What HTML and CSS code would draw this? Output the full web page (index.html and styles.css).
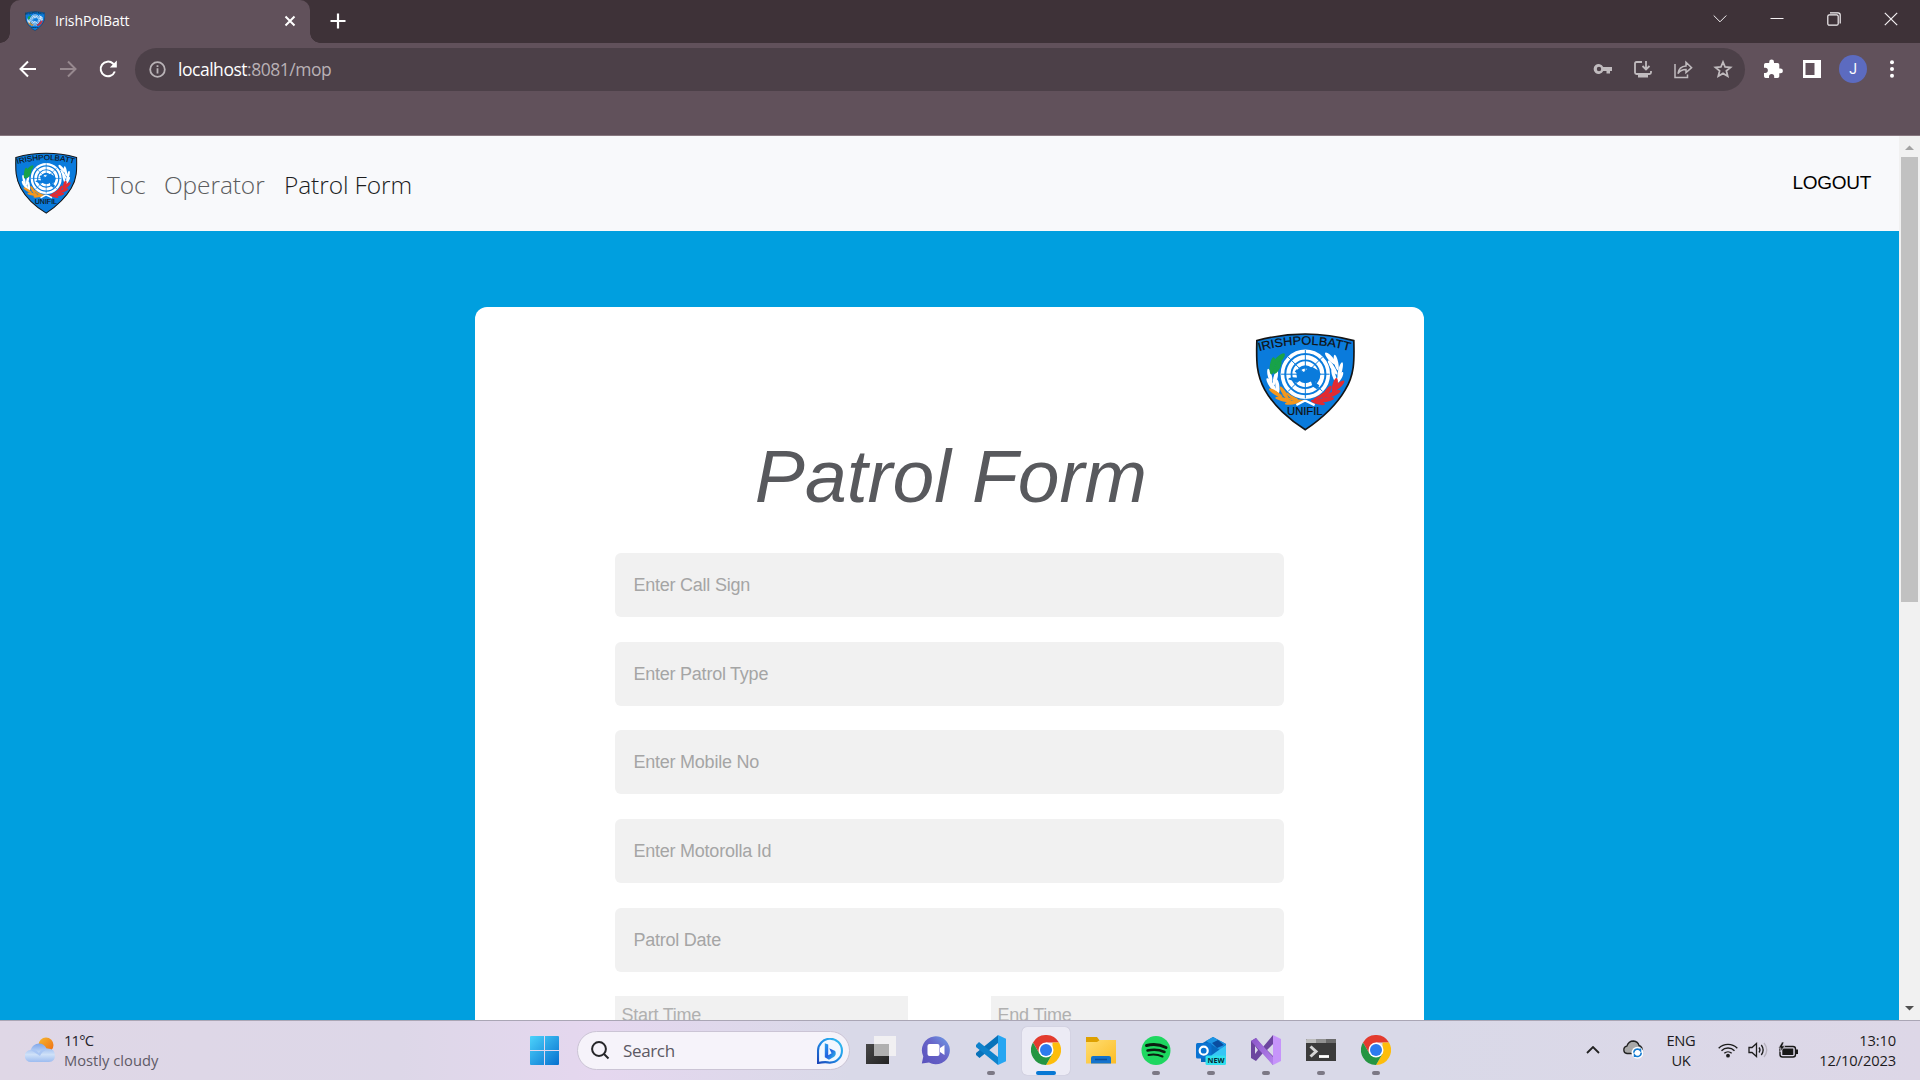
FILE: index.html
```html
<!DOCTYPE html>
<html lang="en">
<head>
<meta charset="utf-8">
<title>IrishPolBatt</title>
<link rel="stylesheet" href="styles.css">
</head>
<body>
<svg class="defs" aria-hidden="true">
  <defs>
    <linearGradient id="win" x1="0" y1="0" x2="1" y2="1"><stop offset="0" stop-color="#4cd3fb"/><stop offset="1" stop-color="#0670cf"/></linearGradient>
    <linearGradient id="sun" x1="0" y1="0" x2="1" y2="1"><stop offset="0" stop-color="#f5b92f"/><stop offset="1" stop-color="#ef6a12"/></linearGradient>
    <linearGradient id="cloud" x1="0" y1="0" x2="0" y2="1"><stop offset="0" stop-color="#7fa6ea"/><stop offset=".6" stop-color="#cfe1f8"/><stop offset="1" stop-color="#9dbcf0"/></linearGradient>
    <linearGradient id="bing" x1="1" y1="0" x2="0" y2="1"><stop offset="0" stop-color="#35c3f0"/><stop offset=".5" stop-color="#1f8fe8"/><stop offset="1" stop-color="#1b45b8"/></linearGradient>
    <linearGradient id="bingb" x1="0" y1="0" x2="1" y2="1"><stop offset="0" stop-color="#2aa5ee"/><stop offset=".5" stop-color="#2160e0"/><stop offset="1" stop-color="#35c8e8"/></linearGradient>
    <linearGradient id="teams" x1="1" y1="0" x2="0" y2="1"><stop offset="0" stop-color="#6fa0e8"/><stop offset=".45" stop-color="#6764c8"/><stop offset="1" stop-color="#5a52bd"/></linearGradient>
    <linearGradient id="folder" x1="0" y1="0" x2="1" y2="1"><stop offset="0" stop-color="#ffdd72"/><stop offset="1" stop-color="#fcbd25"/></linearGradient>
    <linearGradient id="vs" x1="0" y1="0" x2="1" y2="1"><stop offset="0" stop-color="#8a55c8"/><stop offset="1" stop-color="#b684ee"/></linearGradient>
    <linearGradient id="dark" x1="0" y1="0" x2="1" y2="1"><stop offset="0" stop-color="#484848"/><stop offset="1" stop-color="#242424"/></linearGradient>
    <path id="motto" d="M87 124Q225 84 363 124"/>
  </defs>
  <symbol id="shield" viewBox="75 66 300 298">
    <path d="M80 92Q225 52 372 92C373 145 376 192 346 240C318 288 270 330 226 360C180 332 130 287 104 240C76 190 79 145 80 92Z" fill="#0a7bdc" stroke="#151515" stroke-width="5"/>
    <g fill="#fff">
      <ellipse cx="119" cy="198" rx="6" ry="22" transform="rotate(-14 119 198)"/><ellipse cx="136" cy="204" rx="6" ry="23" transform="rotate(14 136 204)"/>
      <ellipse cx="124" cy="226" rx="7" ry="25" transform="rotate(-34 124 226)"/><ellipse cx="142" cy="230" rx="6" ry="22" transform="rotate(-6 142 230)"/>
      <ellipse cx="302" cy="146" rx="7" ry="24" transform="rotate(-42 302 146)"/><ellipse cx="319" cy="158" rx="6" ry="24" transform="rotate(-12 319 158)"/>
      <ellipse cx="308" cy="173" rx="6" ry="25" transform="rotate(-33 308 173)"/><ellipse cx="331" cy="181" rx="6" ry="25" transform="rotate(14 331 181)"/>
      <ellipse cx="312" cy="197" rx="5" ry="21" transform="rotate(-18 312 197)"/><ellipse cx="329" cy="204" rx="6" ry="20" transform="rotate(30 329 204)"/>
    </g>
    <g fill="#18a248"><ellipse cx="146" cy="149" rx="9" ry="25" transform="rotate(44 146 149)"/><ellipse cx="127" cy="168" rx="8" ry="26" transform="rotate(8 127 168)"/><ellipse cx="142" cy="172" rx="8" ry="22" transform="rotate(28 142 172)"/></g>
    <g fill="#f4971d"><ellipse cx="137" cy="250" rx="6" ry="24" transform="rotate(-57 137 250)"/><ellipse cx="162" cy="249" rx="6" ry="22" transform="rotate(-32 162 249)"/><ellipse cx="160" cy="269" rx="6" ry="25" transform="rotate(-78 160 269)"/><ellipse cx="187" cy="261" rx="6" ry="22" transform="rotate(-55 187 261)"/><ellipse cx="188" cy="278" rx="6" ry="24" transform="rotate(80 188 278)"/><path d="M150 250Q180 272 230 270L225 276Q180 279 150 250"/></g>
    <g fill="#e22b31"><ellipse cx="315" cy="228" rx="8" ry="24" transform="rotate(12 315 228)"/><ellipse cx="326" cy="228" rx="7" ry="23" transform="rotate(48 326 228)"/><ellipse cx="291" cy="247" rx="7" ry="23" transform="rotate(35 291 247)"/><ellipse cx="310" cy="252" rx="7" ry="24" transform="rotate(67 310 252)"/><ellipse cx="268" cy="261" rx="6" ry="22" transform="rotate(55 268 261)"/><ellipse cx="287" cy="270" rx="7" ry="26" transform="rotate(80 287 270)"/><ellipse cx="264" cy="278" rx="6" ry="22" transform="rotate(-75 264 278)"/></g>
    <path d="M199 286L225 272L254 286" fill="none" stroke="#fff" stroke-width="7"/>
    <circle cx="226" cy="193" r="77" fill="#0a7bdc"/>
    <g fill="none" stroke="#fff"><circle cx="226" cy="193" r="69" stroke-width="11"/><circle cx="226" cy="193" r="51" stroke-width="13"/><circle cx="226" cy="193" r="33" stroke-width="12"/><circle cx="226" cy="193" r="13" stroke-width="9"/></g>
    <path d="M226 120V266M153 193H299M174 141L278 245M278 141L174 245" stroke="#0a7bdc" stroke-width="3"/>
    <path d="M174 208C181 197 198 205 210 202L203 192L194 185L200 178L214 183L222 190L231 176L247 171L264 181L272 192L268 208L255 217L268 226L262 239L248 230L243 215L230 217L214 211L198 219L186 212Z" fill="#0a7bdc"/>
    <text class="crest-text" font-size="36" textLength="276" lengthAdjust="spacingAndGlyphs"><textPath href="#motto" textLength="276" lengthAdjust="spacingAndGlyphs">IRISHPOLBATT</textPath></text>
    <text class="crest-text" x="171" y="317" font-size="32" textLength="107" lengthAdjust="spacingAndGlyphs">UNIFIL</text>
  </symbol>
  <symbol id="chrome" viewBox="0 0 30 30">
    <path d="M2 7.5A15 15 0 0 1 28 7.5H15L8.5 18.8Z" fill="#e33b2e"/>
    <path d="M28 7.5A15 15 0 0 1 15 30L21.5 18.8L21.5 7.5Z" fill="#fdbd0c"/>
    <path d="M2 7.5A15 15 0 0 0 15 30L21.5 18.8H8.5Z" fill="#259542"/>
    <circle cx="15" cy="15" r="7.5" fill="#fff"/><circle cx="15" cy="15" r="6" fill="#2c7bee"/>
  </symbol>
</svg>

<header class="browser">
  <div class="tabstrip">
    <div class="tab">
      <svg class="favicon"><use href="#shield"/></svg>
      <span class="tab-title">IrishPolBatt</span>
      <svg class="tab-close" viewBox="0 0 12 12"><path d="M1.500 1.500L10.500 10.500M10.500 1.500L1.500 10.500" stroke="#fff" stroke-width="2"/></svg>
    </div>
    <svg class="new-tab" viewBox="0 0 16 16"><path d="M8 .5V15.500M.5 8H15.500" stroke="#fff" stroke-width="2.200"/></svg>
    <div class="window-buttons">
      <svg width="14" height="14" viewBox="0 0 14 14"><path d="M.7 3.500L7 9.800L13.300 3.500" stroke-width="1"/></svg>
      <svg width="14" height="14" viewBox="0 0 14 14"><path d="M.5 6.500H13.500" stroke-width="1"/></svg>
      <svg width="14" height="14" viewBox="0 0 14 14"><rect x=".8" y="2.800" width="10.400" height="10.400" rx="1.500"/><path d="M3 .8H11Q13.200 .8 13.200 3V11.500"/></svg>
      <svg width="14" height="14" viewBox="0 0 14 14"><path d="M.8 .8L13.200 13.200M13.200 .8L.8 13.200"/></svg>
    </div>
  </div>
  <div class="toolbar">
    <svg class="nav-icon" viewBox="0 0 18 18"><path d="M17 9H2M9 1.500L1.500 9L9 16.500" stroke="#fff"/></svg>
    <svg class="nav-icon" viewBox="0 0 18 18"><path d="M1 9H16M9 1.500L16.500 9L9 16.500" stroke="#97898f"/></svg>
    <svg class="nav-icon" viewBox="0 0 18 18"><path d="M15.800 11.500A7.300 7.300 0 1 1 14 3.600L16 5.800" stroke="#fff"/><path d="M17.800 .5V7.500H10.800Z" fill="#fff" stroke="none"/></svg>
    <div class="omnibox">
      <svg class="info" viewBox="0 0 17 17"><circle cx="8.500" cy="8.500" r="7.300" fill="none" stroke="#b9b3b7" stroke-width="1.800"/><path d="M8.500 7.300V12.500M8.500 4.300V6" stroke="#b9b3b7" stroke-width="1.800"/></svg>
      <div class="url"><span class="host">localhost</span><span>:8081/mop</span></div>
      <div class="omni-actions">
        <svg viewBox="0 0 20 20"><path fill-rule="evenodd" stroke="none" d="M10.200 8A5 5 0 1 0 10.200 12H13.500V14.500H17V12H19V8ZM6 7.800A2.200 2.200 0 1 1 6 12.200A2.200 2.200 0 1 1 6 7.800" fill="#c0bbbe"/></svg>
        <svg viewBox="0 0 20 20"><path d="M9 3H3.500Q2 3 2 4.500V13.500Q2 15 3.500 15H16.500Q18 15 18 13.500V12M13 2V10M9.500 7L13 10.500L16.500 7"/><path d="M5 16H15V18.500H5Z" fill="#c0bbbe" stroke="none"/></svg>
        <svg viewBox="0 0 20 20"><path d="M2 5V18.500H14.500V15.500M5 14.500Q6 7.500 13 7V3.200L18.600 8.600L13 13.500V10.600Q8 10.500 5 14.500Z" stroke-width="1.500"/></svg>
        <svg viewBox="0 0 20 20"><path d="M10 3L12.100 8L17.500 8.400L13.400 11.900L14.700 17.200L10 14.400L5.300 17.200L6.600 11.900L2.500 8.400L7.900 8Z"/></svg>
      </div>
    </div>
    <svg class="puzzle" viewBox="0 0 20 20"><path d="M17.500 9.500H16.300V5.800Q16.300 4 14.500 4H11V3A2.400 2.400 0 0 0 6.200 3V4H2.700Q1 4 1 5.800V8.700H2.200A2.600 2.600 0 0 1 2.200 14H1V17.300Q1 19 2.700 19H6V17.700A2.600 2.600 0 0 1 11.200 17.700V19H14.500Q16.300 19 16.300 17.200V14.300H17.500A2.400 2.400 0 0 0 17.500 9.500Z" fill="#fff"/></svg>
    <svg class="panel" viewBox="0 0 18 18"><path fill-rule="evenodd" d="M0 0H18V18H0ZM2.500 3V15H11.500V3Z" fill="#fff"/></svg>
    <span class="avatar">J</span>
    <svg class="more" viewBox="0 0 6 18"><g fill="#fff"><circle cx="3" cy="2.300" r="2"/><circle cx="3" cy="9" r="2"/><circle cx="3" cy="15.700" r="2"/></g></svg>
  </div>
</header>

<div class="viewport">
  <div class="page">
    <nav class="navbar">
      <svg class="brand"><use href="#shield"/></svg>
      <a class="nav-toc">Toc</a><a class="nav-operator">Operator</a><a class="nav-patrol active">Patrol Form</a>
      <a class="logout">LOGOUT</a>
    </nav>
    <main class="stage">
      <form class="card">
        <svg class="crest"><use href="#shield"/></svg>
        <h1>Patrol Form</h1>
        <div class="fields">
          <div class="field">Enter Call Sign</div>
          <div class="field">Enter Patrol Type</div>
          <div class="field">Enter Mobile No</div>
          <div class="field">Enter Motorolla Id</div>
          <div class="field">Patrol Date</div>
          <div class="times"><div class="time">Start Time</div><div class="time">End Time</div></div>
        </div>
      </form>
    </main>
  </div>
  <div class="scrollbar">
    <svg viewBox="0 0 21 21"><path d="M6 14L10.500 9.500L15 14Z" fill="#a3a3a3"/></svg>
    <div class="thumb"></div>
    <svg viewBox="0 0 21 21"><path d="M6 7L10.500 11.500L15 7Z" fill="#505050"/></svg>
  </div>
</div>

<footer class="taskbar">
  <div class="weather">
    <svg viewBox="0 0 30 26"><circle cx="21" cy="8" r="7.500" fill="url(#sun)"/><path d="M6 25A6 6 0 0 1 5.500 13Q8 6.500 14 6.500Q19 6.500 21.500 11.500Q30 11 30 18.500Q30 25 24 25Z" fill="url(#cloud)"/><path d="M6 13Q10 11 14 16Q17 11 23 12Q17 14 15 19" fill="#a9c5f3"/></svg>
    <div><div class="temp">11°C</div><div class="sky">Mostly cloudy</div></div>
  </div>
  <div class="apps">
    <svg class="start" viewBox="0 0 29 29"><path d="M1 0H14V14H0V1Q0 0 1 0ZM15 0H28Q29 0 29 1V14H15ZM0 15H14V29H1Q0 29 0 28ZM15 15H29V28Q29 29 28 29H15Z" fill="url(#win)"/></svg>
    <div class="search">
      <svg class="glass" viewBox="0 0 19 19"><circle cx="8" cy="8" r="6.900"/><path d="M13 13L17.500 17.500"/></svg>
      <span>Search</span>
      <svg class="bing" viewBox="0 0 25 25"><path d="M1 24V12.500A11.500 11.500 0 1 1 12.500 23.700Q8 22.500 1 24Z" fill="#f2f8ff" stroke="url(#bing)" stroke-width="2"/><path d="M7.500 5L10.800 6.200V16.500L14 14.700L11.700 9.800L17.500 12.500Q19 16 16.500 18L11.500 20.800L7.500 18.500Z" fill="url(#bingb)"/></svg>
    </div>
    <div class="app"><svg viewBox="0 0 30 30"><path d="M0 9H23V29H0Z" fill="url(#dark)"/><path d="M8 1H30V21H8Z" fill="#f1f0f2"/><path d="M8 9H23V21H8Z" fill="#b0b0b0"/></svg></div>
    <div class="app"><svg viewBox="0 0 30 30"><path d="M.8 28.500L2.300 21.500A14 14 0 1 1 8 27.500L.8 28.500Z" fill="url(#teams)"/><rect x="6.500" y="9" width="12" height="12" rx="2" fill="#fff"/><path d="M19 13L23.500 10V20L19 17Z" fill="#fff"/></svg></div>
    <div class="app open"><svg viewBox="0 0 30 30"><path d="M22 0V8L3.500 23L0 20V18L21 1Z" fill="#0872ba"/><path d="M0 10L3 7L22 22V30L0 12Z" fill="#0e82cc"/><path d="M22 0L30 3.700V26.300L22 30Z" fill="#26a6f2"/></svg></div>
    <div class="app open current"><svg><use href="#chrome"/></svg></div>
    <div class="app"><svg viewBox="0 0 30 30"><path d="M0 2H11L14 6H30V18H0Z" fill="#dea000"/><path d="M0 7H11L14 5H30V28.500H0Z" fill="url(#folder)"/><path d="M5 28.500V23Q5 21 7 21H23Q25 21 25 23V28.500Z" fill="#1473cc"/><path d="M9 24.500H21" stroke="#0c4f99" stroke-width="1.500"/></svg></div>
    <div class="app open"><svg viewBox="0 0 30 30"><circle cx="15" cy="15.500" r="14.500" fill="#1ed760"/><g fill="none" stroke="#0b1d10" stroke-linecap="round"><path d="M5.500 10.500Q16 8 25 12.500" stroke-width="3"/><path d="M6.500 15.500Q16 13.500 23.500 17" stroke-width="2.500"/><path d="M7.500 20Q15 18.500 21.500 21.500" stroke-width="2"/></g></svg></div>
    <div class="app open"><svg viewBox="0 0 30 30"><path d="M5 9L17 2L30 9V27H5Z" fill="#0869be"/><path d="M10 6L17 2L30 9L24 15Z" fill="#1d95e4"/><path d="M16 8L22 5L28 10L21 13Z" fill="#0a4da0"/><path d="M13 22L30 10V28H13Z" fill="#37c6f5"/><rect y="8" width="15.500" height="15.500" rx="1.500" fill="#0a73d2"/><circle cx="7.700" cy="15.700" r="4" fill="none" stroke="#fff" stroke-width="2.200"/><rect x="9.500" y="20.500" width="20.500" height="9.500" rx="1.500" fill="#31e0ed"/><text class="badge" x="11.500" y="28" textLength="17" lengthAdjust="spacingAndGlyphs">NEW</text></svg></div>
    <div class="app open"><svg viewBox="0 0 30 30"><path fill-rule="evenodd" d="M0 6L5 3L12 12L22 0V30L12 18L5 26L0 23ZM4 11V19L7 15ZM22 9L16 15L22 21Z" fill="#6c459f"/><path d="M0 6L5 3L22 22V30Z" fill="url(#vs)"/><path d="M22 0L30 4V26L22 30Z" fill="#c694fa"/></svg></div>
    <div class="app open"><svg viewBox="0 0 30 30"><path d="M0 5Q0 4 1 4H29Q30 4 30 5V26H0Z" fill="#3b3b3b"/><path d="M0 8V5Q0 4 1 4H10V8Z" fill="#bdbdbd"/><path d="M10 4H20V8H10Z" fill="#929292"/><path d="M20 4H30V8H20Z" fill="#6b6b6b"/><path d="M4.500 11.500L10 16.500L4.500 21.500" fill="none" stroke="#d5d5d5" stroke-width="3"/><path d="M13 21.500H23" stroke="#fff" stroke-width="2.800"/></svg></div>
    <div class="app open"><svg><use href="#chrome"/></svg></div>
  </div>
  <div class="tray">
    <svg class="chevron" viewBox="0 0 14 8"><path d="M1 7L7 1L13 7" fill="none" stroke="#222" stroke-width="1.800"/></svg>
    <svg class="onedrive" viewBox="0 0 21 19"><path d="M4 13.500A3.700 3.700 0 0 1 3.800 6.200Q5.500 1 10.500 1Q15 1.500 16 5.500Q20 6.500 19.500 13.500Z" fill="#a8a8a8" stroke="#222" stroke-width="1.300"/><circle cx="14.500" cy="12.800" r="6" fill="#fff"/><path d="M10.800 12.800A3.700 3.700 0 0 1 17.500 10.700V8.500M18.200 12.800A3.700 3.700 0 0 1 11.500 15V17" fill="none" stroke="#147bd1" stroke-width="1.500"/></svg>
    <div class="lang">ENG<br>UK</div>
    <svg class="wifi" viewBox="0 0 20 16"><g fill="none" stroke="#1d1d1d" stroke-width="1.400"><path d="M.7 6.300A13 13 0 0 1 19.300 6.300"/><path d="M3.500 8.700A9.300 9.300 0 0 1 16.500 8.700"/><path d="M6.300 11.300A5.400 5.400 0 0 1 13.700 11.300"/></g><circle cx="10" cy="13.700" r="1.900" fill="#1d1d1d"/></svg>
    <svg class="volume" viewBox="0 0 20 16"><g fill="none" stroke="#1d1d1d" stroke-width="1.300"><path d="M1 5.500H4L8.500 1.500V14.500L4 10.500H1Z"/><path d="M11 5.500Q13 8 11 10.500M13.300 3Q17 8 13.300 13"/><path d="M16 1Q21.500 8 16 15" stroke="#b7b2bd"/></g></svg>
    <svg class="battery" viewBox="0 0 21 16"><rect x="2" y="4.500" width="15.500" height="10.500" rx="2.500" fill="none" stroke="#181818" stroke-width="1.400"/><rect x="4.300" y="6.500" width="11" height="6.500" fill="#181818"/><path d="M18 7.500H20V12H18Z" fill="#181818"/><path d="M4 0L.5 6H3L2 10L7 4H4.500L6 0Z" fill="#181818" stroke="#ddd8e7" stroke-width=".6"/></svg>
    <div class="clock">13:10<br>12/10/2023</div>
  </div>
</footer>
</body>
</html>
```
FILE: styles.css
```css
* { box-sizing: border-box; }
body {
  margin: 0;
  width: 1920px;
  height: 1080px;
  overflow: hidden;
  display: flex;
  flex-direction: column;
  font-family: "Open Sans", "Noto Sans", sans-serif;
}
svg { display: block; flex: none; }
.defs { position: absolute; width: 0; height: 0; }
.crest-text { font-family: "Liberation Sans", Arial, sans-serif; fill: #111; stroke: #111; stroke-width: .6; }

/* Browser chrome */
.browser { height: 136px; flex: none; background: #61515b; border-bottom: 1px solid #87777f; }
.tabstrip { height: 43px; display: flex; align-items: flex-start; background: #3e3238; padding-left: 10px; }
.tab {
  position: relative;
  width: 300px; height: 43px;
  display: flex; align-items: center;
  padding: 0 14px 1px 15px;
  background: #61515b;
  border-radius: 10px 10px 0 0;
}
.tab::before, .tab::after { content: ""; position: absolute; bottom: 0; width: 10px; height: 10px; }
.tab::before { left: -10px; background: radial-gradient(circle at 0 0, transparent 9.5px, #61515b 10px); }
.tab::after { right: -10px; background: radial-gradient(circle at 100% 0, transparent 9.5px, #61515b 10px); }
.favicon { width: 20px; height: 20px; }
.tab-title { margin: 0 0 2px 10px; font-size: 14px; letter-spacing: -.1px; color: #fff; }
.tab-close { width: 12px; height: 12px; margin-left: auto; }
.new-tab { width: 16px; height: 16px; margin: 13px 0 0 20px; }
.window-buttons { margin: 12px 22px 0 auto; display: flex; }
.window-buttons svg { margin-left: 43px; fill: none; stroke: #f4f1f3; stroke-width: 1.2; }
.toolbar { height: 53px; display: flex; align-items: center; padding: 0 0 1px 19px; }
.nav-icon { width: 18px; height: 18px; margin-right: 22px; fill: none; stroke-width: 2; }
.omnibox {
  width: 1610px; height: 43px; margin: 0 0 0 -4px;
  border-radius: 22px; background: #4c4048;
  display: flex; align-items: center; padding: 0 12px 0 14px;
}
.info { width: 17px; height: 17px; }
.url { display: flex; margin-left: 12px; font-size: 17.5px; color: #b9b1b6; letter-spacing: -.47px; }
.host { color: #fff; }
.omni-actions { display: flex; gap: 20px; margin-left: auto; }
.omni-actions svg { width: 20px; height: 20px; fill: none; stroke: #c0bbbe; stroke-width: 1.8; }
.puzzle { width: 20px; height: 20px; margin-left: 18px; }
.panel { width: 18px; height: 18px; margin-left: 20px; }
.avatar { width: 28px; height: 28px; margin-left: 18px; border-radius: 50%; background: #5c6bc0; color: #fff; font: 14px/28px Roboto, sans-serif; text-align: center; }
.more { width: 6px; height: 18px; margin-left: 22px; }

/* Web page */
.viewport { height: 884px; flex: none; display: flex; overflow: hidden; }
.page { width: 1899px; height: 884px; overflow: hidden; }
.navbar { height: 95px; display: flex; align-items: center; padding: 0 28px 0 15px; background: #f8f9fb; font-size: 24.5px; letter-spacing: -.1px; font-weight: 350; color: #5c5d5e; }
.brand { width: 64px; height: 62px; margin: 0 0 1px -1px; }
.navbar a { white-space: nowrap; padding-top: 1px; }
.nav-toc { margin-left: 29px; width: 57px; }
.nav-operator { width: 120px; }
.navbar .active { color: #1c1d1e; }
.navbar .logout { margin-left: auto; padding: 0 0 2px; font: 19px "Liberation Sans", Arial, sans-serif; letter-spacing: -.3px; color: #000; }
.stage { height: 789px; background: #009fdf; padding: 76px 475px 0; overflow: hidden; }
.card { height: 900px; background: #fff; border-radius: 12px; padding: 25px 140px 0; display: flex; flex-direction: column; font-family: "Liberation Sans", Arial, sans-serif; }
.crest { width: 100px; height: 99px; align-self: flex-end; margin-right: -71px; }
.card h1 { margin: 3px 0 0; font-size: 75px; line-height: 84px; font-weight: 400; font-style: italic; color: #58595d; text-align: center; letter-spacing: .05px; white-space: nowrap; padding-left: 3px; }
.fields { margin-top: 35px; display: flex; flex-direction: column; gap: 24.7px; font-size: 18px; letter-spacing: -.24px; color: #a5a5a5; }
.field { height: 64px; line-height: 64px; padding-left: 18.5px; background: #f1f1f1; border-radius: 6px; }
.times { display: flex; justify-content: space-between; }
.time { width: 293px; height: 64px; padding: 9px 6.5px; background: #f1f1f1; color: #b0b0b0; }
.scrollbar { width: 21px; background: #f1f1f1; display: flex; flex-direction: column; align-items: center; }
.scrollbar svg { width: 21px; height: 21px; }
.thumb { width: 17px; height: 445px; background: #c1c1c1; margin-bottom: auto; }

/* Taskbar */
.taskbar {
  height: 60px; flex: none; display: grid; grid-template-columns: 530px 877px 1fr;
  border-top: 1px solid #aaa6b5;
  background: linear-gradient(90deg, #dfd7e6 0, #ddd7e8 400px, #e5d7ef 600px, #d9d9e8 850px, #d9d9e8 1400px, #ddd7e7 1920px);
}
.weather { display: flex; align-items: center; padding: 0 0 2px 25px; font-size: 14.7px; line-height: 20px; }
.weather svg { width: 30px; height: 26px; margin-right: 9px; }
.temp { color: #24222a; letter-spacing: -.8px; }
.sky { color: #5e5a66; letter-spacing: .02px; }
.apps { display: flex; align-items: center; }
.start { width: 29px; height: 29px; }
.search { width: 273px; height: 39px; flex: none; margin: 0 7px 0 18px; border: 1px solid #cbc4d5; border-radius: 20px; background: #f6f3fa; display: flex; align-items: center; padding: 0 6px 0 13px; }
.search span { margin-left: 13px; font-size: 17px; letter-spacing: -.35px; color: #5c5963; }
.glass { width: 19px; height: 19px; fill: none; stroke: #252528; stroke-width: 2; }
.bing { width: 26px; height: 26px; margin-left: auto; }
.app { position: relative; width: 48px; height: 48px; margin-right: 7px; flex: none; display: flex; align-items: center; justify-content: center; border-radius: 5px; }
.app svg { width: 30px; height: 30px; margin-bottom: 1px; }
.open::after { content: ""; position: absolute; bottom: 0; left: 20px; width: 8px; height: 4px; border-radius: 2px; background: #7c7985; }
.current { background: #ecebf5; box-shadow: 0 0 1px #aaa5bb; }
.current::after { left: 14px; width: 20px; background: #0878d4; }
.badge { font: 700 7.5px "Open Sans", sans-serif; fill: #062b33; }
.tray { display: flex; align-items: center; padding: 0 24px 2px 179px; font-size: 14.7px; line-height: 20px; color: #1d1b21; letter-spacing: -.12px; }
.chevron { width: 14px; height: 8px; }
.onedrive { width: 21px; height: 19px; margin-left: 23px; }
.lang { width: 40px; margin-left: 17px; text-align: center; letter-spacing: -.3px; }
.wifi { width: 20px; height: 16px; margin-left: 17px; }
.volume { width: 20px; height: 16px; margin-left: 10px; }
.battery { width: 21px; height: 16px; margin-left: 10px; }
.clock { margin-left: auto; text-align: right; }
```
